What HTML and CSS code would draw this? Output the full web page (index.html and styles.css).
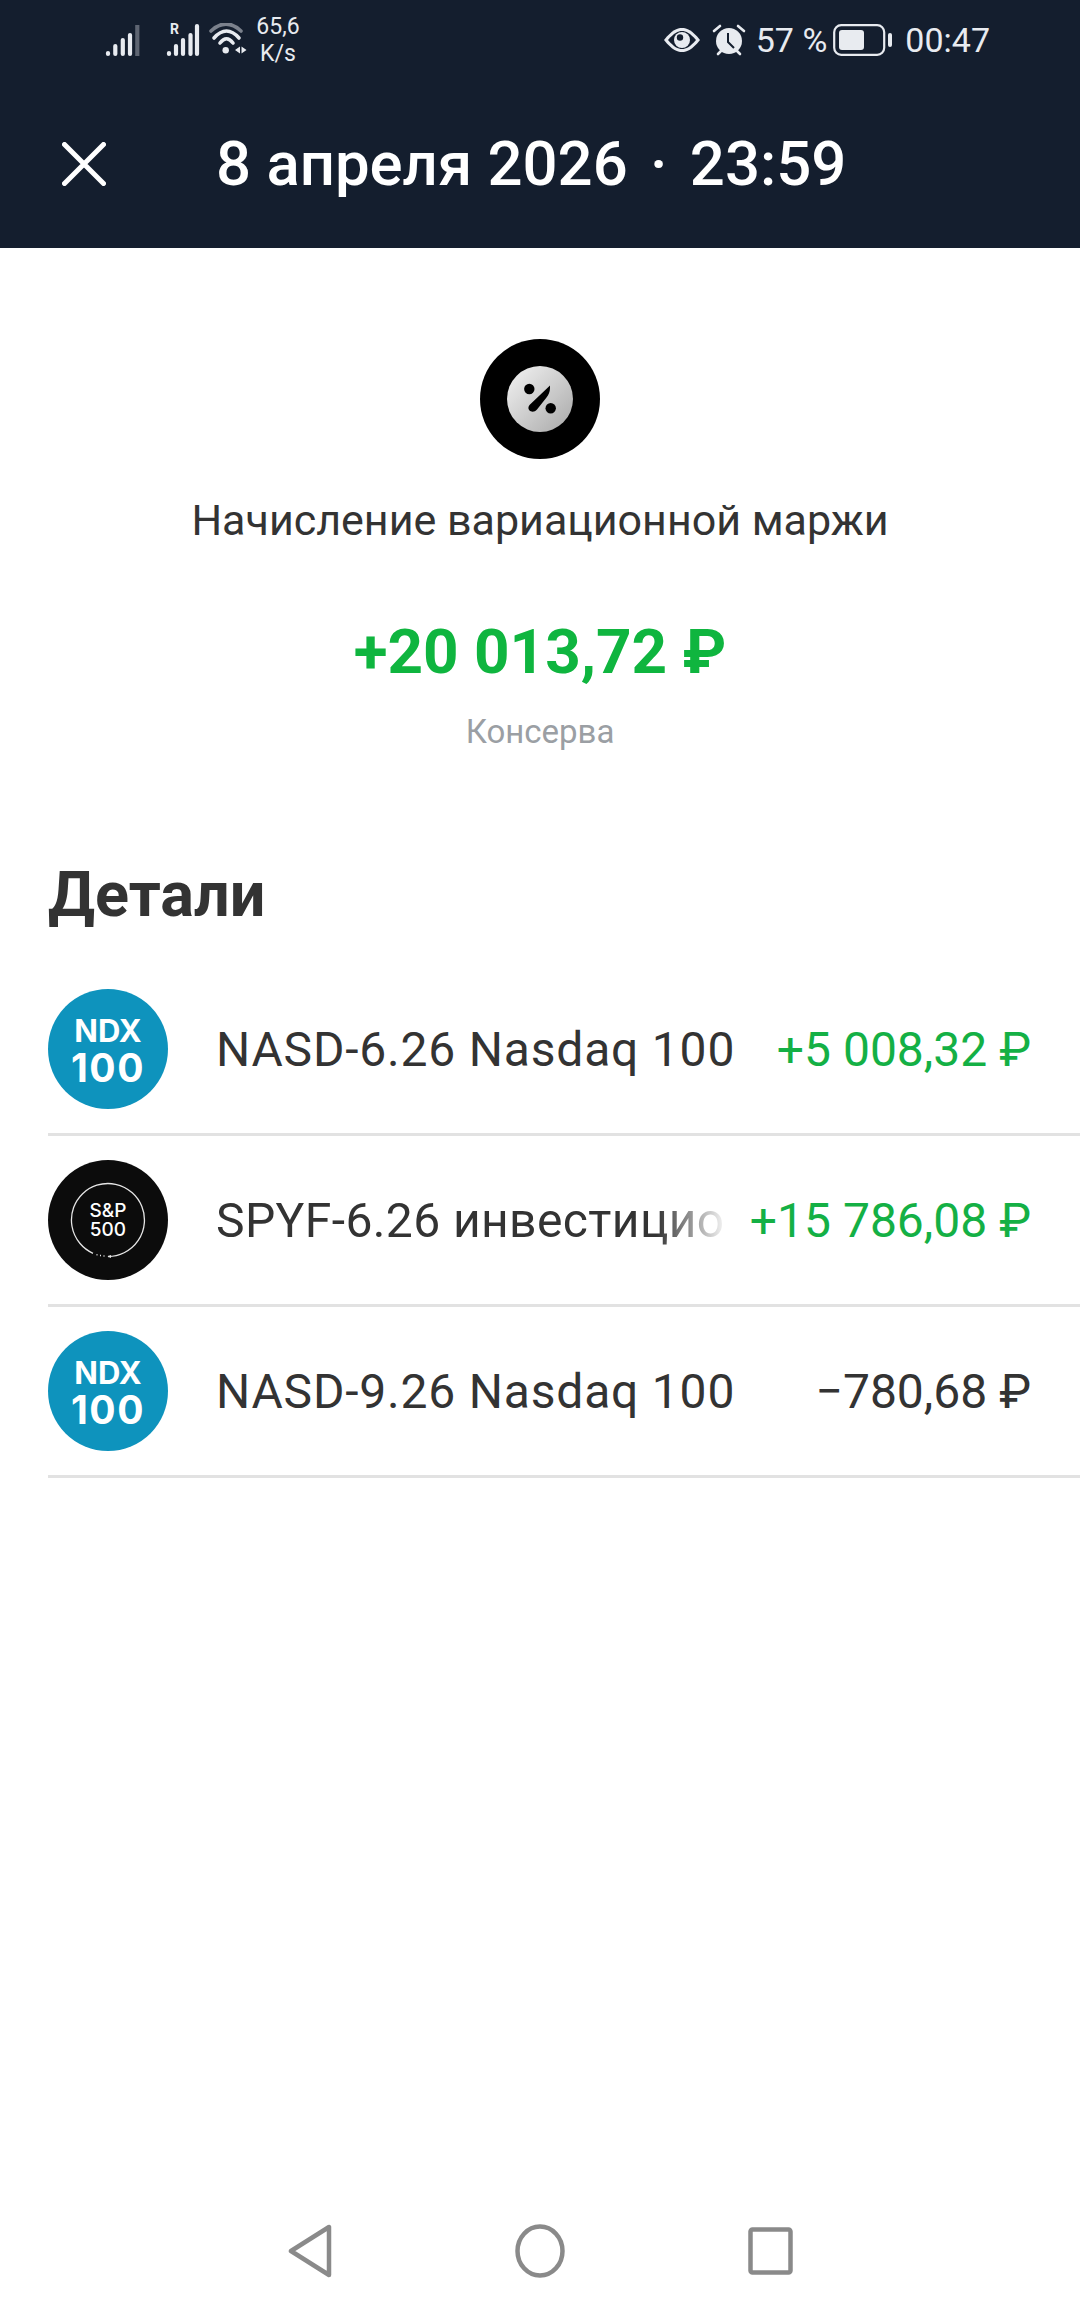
FILE: index.html
```html
<!DOCTYPE html>
<html lang="ru">
<head>
    <meta charset="UTF-8">
    <meta name="viewport" content="width=device-width, initial-scale=1.0">
    <title>Начисление вариационной маржи</title>
    <link rel="stylesheet" href="styles.css">
</head>
<body>
    <div class="screen">
        <!-- Dark top part: status bar and title -->
        <header class="top">
            <div class="status-bar">
                <div class="status-left">
                    <svg width="36" height="34" viewBox="0 0 36 34">
                        <g fill="none" stroke="#e8ebf0" stroke-width="4.200" stroke-linecap="round">
                            <path d="M3 31v-1M10.300 31v-8M17.800 31v-14M25 31v-19"/>
                            <path d="M32.300 33V2" stroke-opacity=".35" stroke-linecap="butt"/>
                        </g>
                    </svg>
                    <svg class="sig2" width="34" height="42" viewBox="0 -4 34 42">
                        <text x="4" y="11" class="roam">R</text>
                        <g fill="none" stroke="#e8ebf0" stroke-width="4.200" stroke-linecap="round">
                            <path d="M3 31v-1M10 31v-8M17 31v-14M24.500 31v-19M31 31V3"/>
                        </g>
                    </svg>
                    <svg class="wifi" width="40" height="34" viewBox="0 0 40 34">
                        <g fill="none" stroke-linecap="round">
                            <path d="M3 8Q18 -6 33 8" stroke="#7b818c" stroke-width="3.600"/>
                            <path d="M6 15Q18.500 1 31 15" stroke="#e8ebf0" stroke-width="3.600"/>
                            <path d="M12 20Q18.500 11.500 25 20" stroke="#e8ebf0" stroke-width="3.600"/>
                        </g>
                        <circle cx="17.700" cy="27.300" r="3.200" fill="#e8ebf0"/>
                        <path d="M32 23.500v7l-5-3.500zM33.500 23.500v7l5-3.500z" fill="#e8ebf0"/>
                    </svg>
                    <div class="speed">65,6<br>K/s</div>
                </div>
                <div class="status-right">
                    <svg width="38" height="26" viewBox="0 0 38 26">
                        <path d="M1 13C9 3 14 1 19 1s10 2 18 12C29 23 24 25 19 25S9 23 1 13z" fill="#e8ebf0"/>
                        <path d="M5 13C11 6 15 4 19 4s8 2 14 9C27 20 23 22 19 22s-8-2-14-9z" fill="#141e2e"/>
                        <circle cx="19" cy="13" r="8" fill="#e8ebf0"/>
                        <circle cx="17" cy="10.500" r="3.200" fill="#141e2e"/>
                    </svg>
                    <svg class="alarm" width="34" height="32" viewBox="0 0 34 32">
                        <circle cx="17" cy="17" r="13" fill="#e8ebf0"/>
                        <path d="M16 9v9l6 6" fill="none" stroke="#141e2e" stroke-width="2"/>
                        <path d="M2 7l6-5M32 7l-6-5M6 30l3-3M28 30l-3-3" stroke="#e8ebf0" stroke-width="2.600" stroke-linecap="round"/>
                    </svg>
                    <span class="batt-pct">57 %</span>
                    <svg class="batt" width="60" height="32" viewBox="0 0 60 32">
                        <rect x="1.200" y="1.200" width="50" height="29.600" rx="7" fill="none" stroke="#e8ebf0" stroke-width="2.200"/>
                        <rect x="6" y="6" width="25" height="20" rx="3" fill="#e8ebf0"/>
                        <rect x="55" y="9" width="4" height="14" rx="2" fill="#e8ebf0"/>
                    </svg>
                    <span class="clock">00:47</span>
                </div>
            </div>
            <div class="title-bar">
                <svg class="close" width="44" height="44" viewBox="0 0 44 44">
                    <path d="M2.500 2.500l39 39M41.500 2.500l-39 39" stroke="#fff" stroke-width="5" stroke-linecap="round"/>
                </svg>
                <h1>8 апреля 2026 <span class="sep">·</span> 23:59</h1>
            </div>
        </header>

        <!-- Operation summary -->
        <section class="summary">
            <div class="op-icon">
                <div class="op-icon-inner">
                    <svg width="34" height="32" viewBox="0 0 34 32">
                        <circle cx="6.300" cy="6" r="5.200"/>
                        <circle cx="27.700" cy="25.300" r="5.200"/>
                        <path d="M27 2.500L27 5C27 9 25.500 12 23.500 14.500L14 26.500C11.500 29.500 8 29 6.500 27.500C5 26 5 24 6.500 22z"/>
                    </svg>
                </div>
            </div>
            <div class="op-name">Начисление вариационной маржи</div>
            <div class="op-sum">+20 013,72 ₽</div>
            <div class="op-account">Консерва</div>
        </section>

        <!-- Details list -->
        <section class="details">
            <h2>Детали</h2>
            <div class="row">
                <div class="logo logo-ndx"><span class="ndx-top">NDX</span><span class="ndx-num">100</span></div>
                <div class="row-name">NASD-6.26 Nasdaq 100</div>
                <div class="row-sum plus">+5 008,32 ₽</div>
            </div>
            <div class="row">
                <div class="logo logo-sp">
                    <svg class="sp-ring" width="76" height="76" viewBox="0 0 76 76">
                        <path d="M38 74.500A36.500 36.500 0 1 0 23 71.300" fill="none" stroke="#e6e6e6" stroke-width="1.300"/>
                        <path d="M26.500 72.800h1M30 73.500h1M33.500 74h1" stroke="#e6e6e6" stroke-width="1.500"/>
                        <path d="M41 73l-3.500 1.500 3.500 1.500z" fill="#e6e6e6"/>
                    </svg>
                    <span class="sp-text">S&amp;P<br>500</span>
                </div>
                <div class="row-name fade">SPYF-6.26 инвестицио</div>
                <div class="row-sum plus">+15 786,08 ₽</div>
            </div>
            <div class="row">
                <div class="logo logo-ndx"><span class="ndx-top">NDX</span><span class="ndx-num">100</span></div>
                <div class="row-name">NASD-9.26 Nasdaq 100</div>
                <div class="row-sum">−780,68 ₽</div>
            </div>
        </section>

        <!-- Android nav buttons -->
        <nav class="nav-bar">
            <svg width="44" height="54" viewBox="0 0 44 54">
                <path d="M41 3v48L3 27z" fill="none" stroke="#8a8a8a" stroke-width="4.500" stroke-linejoin="round"/>
            </svg>
            <svg width="50" height="54" viewBox="0 0 50 54">
                <ellipse cx="25" cy="27" rx="22.500" ry="24.500" fill="none" stroke="#8a8a8a" stroke-width="4.500"/>
            </svg>
            <svg width="45" height="48" viewBox="0 0 45 48">
                <rect x="2.500" y="2.500" width="40" height="43" rx="2" fill="none" stroke="#8a8a8a" stroke-width="4.500"/>
            </svg>
        </nav>
    </div>
</body>
</html>
```

FILE: styles.css
```css
body {
    margin: 0;
    padding: 0;
    background-color: #fff;
    font-family: Roboto, "Noto Sans", sans-serif;
    color: #333;
}

.screen {
    width: 1080px;
    height: 2312px;
    display: flex;
    flex-direction: column;
    overflow: hidden;
}

/* Top dark block */
.top {
    height: 248px;
    background-color: #141e2e;
    color: #fff;
    flex-shrink: 0;
}

.status-bar {
    height: 80px;
    display: flex;
    justify-content: space-between;
    align-items: center;
    padding: 0 90px 0 105px;
    color: #e8ebf0;
}

.status-left,
.status-right {
    display: flex;
    align-items: center;
}

.sig2 {
    margin-left: 25px;
}

.wifi {
    margin-left: 8px;
}

.roam {
    font-size: 14px;
    font-weight: 700;
    fill: #e8ebf0;
}

.speed {
    width: 60px;
    font-size: 23px;
    line-height: 27px;
    text-align: center;
}

.alarm {
    margin-left: 11px;
}

.batt-pct {
    margin-left: 10px;
    font-size: 34px;
}

.batt {
    margin-left: 6px;
}

.clock {
    margin-left: 12px;
    font-size: 34px;
}

.title-bar {
    display: flex;
    align-items: center;
    height: 168px;
    padding-left: 62px;
}

.title-bar h1 {
    margin: 0 0 0 110px;
    font-size: 61.7px;
    font-weight: 500;
    white-space: nowrap;
}

.sep {
    margin: 0 7px;
}

/* Summary */
.summary {
    display: flex;
    flex-direction: column;
    align-items: center;
    padding-top: 91px;
}

.op-icon {
    width: 120px;
    height: 120px;
    border-radius: 50%;
    background-color: #000;
    display: flex;
    align-items: center;
    justify-content: center;
}

.op-icon-inner {
    width: 66px;
    height: 66px;
    border-radius: 50%;
    background: linear-gradient(135deg, #f4f4f4, #a8a8a8);
    display: flex;
    align-items: center;
    justify-content: center;
}

.op-name {
    margin-top: 36px;
    font-size: 43px;
    line-height: 50px;
    color: #333;
}

.op-sum {
    margin-top: 72px;
    font-size: 62px;
    line-height: 70px;
    font-weight: 700;
    color: #0fb53f;
}

.op-account {
    margin-top: 27px;
    font-size: 33px;
    line-height: 36px;
    color: #9b9fa4;
}

/* Details */
.details {
    padding: 0 0 0 48px;
    margin-top: 110px;
}

.details h2 {
    margin: 0 0 35px 0;
    font-size: 63px;
    line-height: 70px;
    font-weight: 700;
    color: #333;
}

.row {
    display: flex;
    align-items: center;
    height: 168px;
    border-bottom: 3px solid #e2e2e2;
    padding-right: 49px;
}

.logo {
    width: 120px;
    height: 120px;
    border-radius: 50%;
    flex-shrink: 0;
    display: flex;
    flex-direction: column;
    align-items: center;
    justify-content: center;
    color: #fff;
    position: relative;
    font-family: Inter, sans-serif;
}

.logo-ndx {
    background-color: #0e93bd;
}

.ndx-top {
    font-size: 31px;
    line-height: 37px;
    font-weight: 700;
}

.ndx-num {
    font-size: 39px;
    line-height: 38px;
    font-weight: 700;
    letter-spacing: 1.5px;
}

.logo-sp {
    background-color: #0c0c0c;
}

.sp-ring {
    position: absolute;
    left: 22px;
    top: 22px;
}

.sp-text {
    font-size: 19px;
    line-height: 19px;
    text-align: center;
    font-weight: 500;
}

.row-name {
    margin-left: 48px;
    flex: 1;
    min-width: 0;
    font-size: 48px;
    letter-spacing: 0.8px;
    white-space: nowrap;
    overflow: hidden;
    color: #333;
}

.row-name.fade {
    letter-spacing: 0.4px;
    -webkit-mask-image: linear-gradient(to right, #000 86%, transparent 100%);
    mask-image: linear-gradient(to right, #000 86%, transparent 100%);
}

.row-sum {
    margin-left: 22px;
    font-size: 48px;
    white-space: nowrap;
    color: #333;
}

.row-sum.plus {
    color: #14b045;
}

/* Nav bar */
.nav-bar {
    margin-top: auto;
    height: 90px;
    display: flex;
    align-items: center;
    justify-content: center;
    gap: 183px;
    box-sizing: border-box;
    padding-bottom: 32px;
}
```
